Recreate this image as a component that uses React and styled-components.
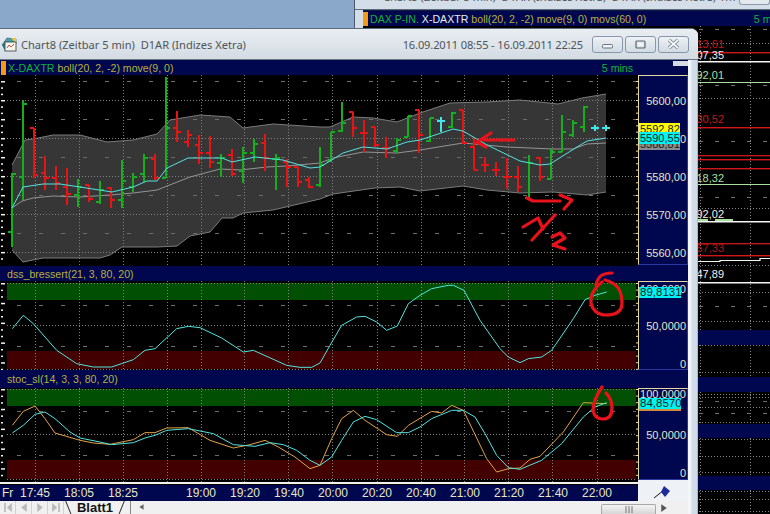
import React from 'react';
import styled, { createGlobalStyle } from 'styled-components';

const navy = '#00074f';
const cream = '#e6e6c4';
const chartFont = '"Liberation Sans", Arial, sans-serif';

const GlobalStyle = createGlobalStyle`
  html, body {
    margin: 0;
    padding: 0;
    background: #8aa9ca;
    overflow: hidden;
  }
`;

// x, high, low, open (left tick), close (right tick), colour
const G = '#16ad1e';
const R = '#e81414';
const C = '#3fe6ea';
const BARS = [
  [12, 173, 247, 232, 174, G], [23, 100, 200, 177, 104, G], [34, 128, 178, 128, 175, R],
  [45, 156, 190, 173, 178, R], [56, 166, 190, 178, 183, R], [67, 168, 205, 187, 194, R],
  [78, 179, 207, 195, 187, G], [89, 185, 202, 185, 199, R], [100, 181, 204, 202, 190, G],
  [111, 187, 208, 188, 200, R], [122, 160, 208, 200, 181, G], [133, 173, 192, 187, 177, G],
  [144, 154, 182, 174, 158, G], [155, 154, 180, 159, 178, R], [166, 77, 178, 178, 128, G],
  [177, 111, 142, 128, 132, R], [188, 130, 147, 142, 135, R], [199, 135, 164, 145, 153, R],
  [210, 136, 168, 153, 162, R], [221, 154, 177, 163, 158, G], [232, 149, 176, 155, 174, R],
  [243, 147, 183, 171, 153, G], [254, 139, 162, 153, 144, G], [265, 134, 171, 143, 158, R],
  [276, 154, 190, 159, 158, G], [287, 159, 187, 162, 167, R], [298, 167, 187, 167, 182, R],
  [309, 177, 188, 180, 187, R], [320, 147, 187, 185, 165, G], [331, 132, 162, 161, 132, G],
  [342, 102, 132, 131, 123, G], [353, 112, 137, 112, 128, R], [364, 120, 152, 133, 133, R],
  [375, 127, 147, 127, 145, R], [386, 137, 158, 148, 148, R], [397, 138, 153, 151, 140, G],
  [408, 116, 137, 137, 116, G], [419, 110, 153, 110, 135, R], [430, 118, 142, 141, 118, G],
  [441, 117, 132, 121, 121, C], [452, 112, 128, 127, 113, G], [463, 110, 144, 110, 143, R],
  [474, 137, 170, 147, 170, R], [485, 157, 172, 165, 165, R], [496, 162, 176, 170, 170, R],
  [507, 158, 189, 177, 177, R], [518, 166, 192, 177, 187, R], [529, 155, 198, 198, 163, G],
  [540, 157, 181, 158, 177, R], [551, 148, 179, 179, 152, G], [562, 115, 152, 152, 132, G],
  [573, 120, 137, 135, 123, G], [584, 106, 132, 127, 107, G], [595, 125, 131, 128, 128, C],
  [606, 125, 131, 128, 128, C],
];

const BAND_TOP = [
  [12, 165], [25, 140], [33, 139], [53, 135], [80, 135], [107, 142], [133, 140], [157, 134],
  [170, 120], [200, 115], [230, 117], [243, 128], [273, 124], [320, 127], [330, 127], [353, 117],
  [373, 118], [397, 122], [420, 113], [450, 103], [487, 102], [520, 100], [558, 104], [582, 98],
  [606, 94],
];
const BAND_BOTTOM = [
  [12, 250], [23, 262], [43, 258], [100, 258], [110, 255], [122, 247], [157, 247], [177, 246],
  [190, 236], [210, 232], [222, 218], [233, 218], [243, 213], [273, 210], [320, 199], [333, 194],
  [375, 188], [400, 187], [420, 191], [463, 186], [487, 190], [520, 193], [553, 192], [587, 195],
  [606, 192],
];
const MOVS = [
  [12, 208], [22, 201], [33, 198], [53, 196], [80, 197], [110, 195], [133, 193], [157, 190],
  [190, 177], [220, 169], [240, 170], [267, 167], [287, 166], [320, 163], [333, 158], [363, 152],
  [397, 153], [420, 150], [463, 143], [507, 147], [553, 149], [573, 149], [587, 144], [606, 143],
];
const MOVE = [
  [12, 208], [23, 187], [43, 184], [60, 184], [80, 187], [112, 192], [133, 187], [147, 181],
  [157, 181], [167, 168], [188, 158], [222, 158], [232, 162], [255, 157], [283, 160], [310, 168],
  [320, 167], [330, 161], [343, 153], [363, 147], [387, 149], [407, 142], [420, 140], [453, 129],
  [463, 131], [487, 145], [520, 161], [540, 165], [550, 164], [577, 147], [587, 141], [606, 138],
];

// the two lower panes were read in 3x crops: left half and right half
const scale = (left, right, top) => [
  ...left.map(([x, y]) => [x / 3, top + y / 3]),
  ...right.map(([x, y]) => [320 + x / 3, top + y / 3]),
];

const DSS = scale(
  [[37, 200], [70, 160], [100, 185], [170, 265], [230, 305], [280, 315], [335, 315], [400, 293],
    [435, 265], [465, 260], [530, 200], [565, 193], [600, 197], [665, 228], [730, 270], [760, 265],
    [860, 310], [900, 316], [935, 316]],
  [[0, 303], [30, 250], [65, 190], [110, 165], [135, 163], [170, 180], [200, 205], [232, 192],
    [265, 125], [300, 100], [335, 80], [385, 70], [400, 70], [432, 85], [480, 175], [540, 260],
    [565, 285], [600, 302], [625, 290], [665, 285], [695, 265], [760, 170], [795, 113], [825, 100],
    [860, 90]],
  262
);
const STOC_CYAN = scale(
  [[37, 183], [70, 160], [105, 127], [135, 120], [165, 140], [210, 180], [240, 198], [300, 210],
    [335, 218], [400, 212], [435, 198], [465, 190], [500, 175], [565, 170], [640, 185], [700, 218],
    [765, 223], [810, 212], [850, 218], [890, 235], [930, 265]],
  [[0, 280], [35, 255], [65, 205], [100, 150], [135, 133], [170, 143], [230, 182], [265, 182],
    [300, 165], [335, 140], [395, 115], [430, 115], [465, 135], [495, 185], [530, 250], [565, 287],
    [600, 292], [665, 265], [725, 215], [790, 135], [825, 105], [860, 92]],
  372
);
const STOC_ORANGE = scale(
  [[37, 160], [70, 118], [105, 102], [135, 140], [165, 183], [240, 205], [280, 213], [330, 217],
    [400, 203], [435, 182], [465, 182], [500, 168], [565, 167], [630, 205], [700, 228], [750, 218],
    [795, 205], [835, 225], [885, 255], [930, 290]],
  [[0, 280], [35, 200], [65, 140], [100, 115], [135, 145], [200, 188], [232, 193], [265, 160],
    [335, 118], [365, 123], [395, 100], [430, 115], [500, 260], [530, 300], [565, 290], [600, 288],
    [630, 262], [660, 253], [730, 180], [790, 92], [860, 95]],
  372
);

const GRID_X = [35, 79, 123, 167, 201, 244, 288, 332, 377, 421, 464, 508, 552, 597];

const pts = (list) => list.map(([x, y]) => `${x},${y}`).join(' ');

const Desktop = styled.div`
  position: relative;
  width: 770px;
  height: 514px;
  overflow: hidden;
  background: #8aa9ca;
  font-family: ${chartFont};
`;

const BackWindow = styled.div`
  position: absolute;
  left: 354px;
  top: 0;
  width: 416px;
  height: 514px;
  display: flex;
  flex-direction: column;
  background: #d4dee8;
  border-left: 1px solid #4d5b6b;
  box-sizing: border-box;
`;

const BackTitle = styled.div`
  height: 10px;
  flex: none;
  overflow: hidden;
  display: flex;
  padding-left: 28px;
  gap: 4px;
  font-size: 11px;
  line-height: 16px;
  color: #555;
  font-family: "Noto Sans", sans-serif;
  white-space: pre;
  border-bottom: 1px solid #5c6b7b;
  box-sizing: border-box;
`;

const BackTitleText = styled.span`
  margin-top: -11px;
  flex: 1;
  min-width: 0;
  overflow: hidden;
`;

const BackButton = styled.span`
  width: 31px;
  height: 5px;
  border: 1px solid #8c9bad;
  border-top: 0;
  border-radius: 0 0 3px 3px;
  background: #e4e9ee;
  box-sizing: border-box;
  flex: none;
`;

const BackBody = styled.div`
  flex: 1;
  margin-left: 8px;
  display: flex;
  flex-direction: column;
  min-height: 0;
  overflow: hidden;
`;

const BackHeader = styled.div`
  height: 16px;
  flex: none;
  background: ${navy};
  display: flex;
  align-items: center;
  font-size: 10.6px;
  white-space: nowrap;
  border-top: 1px solid #101a40;
  box-sizing: border-box;
`;

const Marker = styled.span`
  width: 5px;
  height: 14px;
  background: #f59a12;
  flex: none;
  margin-right: 2px;
`;

const HeadText = styled.span`
  color: ${({ $color }) => $color};
  margin-right: ${({ $gap }) => $gap ?? 3}px;
`;

const PushRight = styled.span`
  margin-left: auto;
  margin-right: ${({ $bleed }) => -($bleed || 0)}px;
  flex: none;
  align-self: stretch;
  display: flex;
  align-items: center;
`;

const BackStrip = styled.div`
  height: ${({ $h }) => $h}px;
  flex: none;
  background: ${navy};
`;

const ChartSvg = styled.svg`
  display: block;
  flex: none;
  background: #000;
  font-family: ${chartFont};
  font-size: 11px;
`;

const FrontWindow = styled.div`
  position: absolute;
  left: 0;
  top: 28px;
  width: 698px;
  height: 486px;
  display: flex;
  flex-direction: column;
  background: #d6e0ea;
  border-top: 1px solid #5d6b7a;
  border-top-right-radius: 7px;
  box-sizing: border-box;
  overflow: hidden;
`;

const TitleBar = styled.div`
  height: 31px;
  flex: none;
  display: flex;
  align-items: center;
  padding: 0 9px 0 1px;
  background: linear-gradient(#e9eef2, #dde4ea 55%, #d3dbe3);
  border-bottom: 1px solid #6b7886;
  box-sizing: border-box;
  font-family: "Noto Sans", sans-serif;
  font-size: 11.1px;
  color: #4f5458;
  white-space: pre;
`;

const TitleText = styled.span`
  margin-left: 4px;
  flex: 1;
`;

const DateText = styled.span`
  margin-right: 9px;
  letter-spacing: -0.14px;
`;

const WinButtons = styled.div`
  display: flex;
  gap: 2px;
`;

const WinButton = styled.div`
  width: 31px;
  height: 17px;
  display: flex;
  align-items: center;
  justify-content: center;
  border: 1px solid #8797a9;
  border-radius: 3px;
  background: linear-gradient(#eef2f5, #dfe5eb 50%, #d3dbe3);
  box-sizing: border-box;
`;

const WindowBody = styled.div`
  flex: 1;
  display: flex;
  min-height: 0;
`;

const Content = styled.div`
  width: 688px;
  flex: none;
  display: flex;
  flex-direction: column;
`;

const SideFrame = styled.div`
  flex: 1;
  background: linear-gradient(90deg, #f4f7fa 0, #f4f7fa 25%, #d3deea 45%, #cfdbe8 100%);
  border-right: 1px solid #a9b8c8;
`;

const PaneHeader = styled.div`
  height: ${({ $h }) => $h}px;
  flex: none;
  display: flex;
  align-items: center;
  background: ${navy};
  font-size: 10.6px;
  white-space: nowrap;
  padding-left: ${({ $pad }) => $pad || 0}px;
`;

const GripTab = styled.span`
  width: 15px;
  height: 5px;
  background: #d5dbe2;
  margin: 1px 0 0 40px;
  align-self: flex-start;
  flex: none;
`;

const PaneBody = styled.div`
  display: flex;
  height: ${({ $h }) => $h}px;
  flex: none;
  background: ${({ $under }) => $under};
`;

const Axis = styled.div`
  position: relative;
  width: 50px;
  height: ${({ $h }) => $h}px;
  background: ${navy};
  border: 1px solid #2a36a0;
  border-top-color: #e6d9a0;
  border-left-color: #e6d9a0;
  box-sizing: border-box;
  overflow: hidden;
  font-size: 11px;
  color: ${cream};
`;

const AxisLabel = styled.span`
  position: absolute;
  right: 1px;
  top: ${({ $y }) => $y - 6}px;
  line-height: 12px;
`;

const PriceTag = styled.span`
  position: absolute;
  left: 0;
  top: ${({ $y }) => $y}px;
  width: ${({ $w }) => $w}px;
  height: ${({ $h }) => $h}px;
  line-height: ${({ $h }) => $h}px;
  padding-left: 1px;
  overflow: hidden;
  color: #122;
  background: ${({ $bg }) => $bg};
  font-size: ${({ $size }) => $size || 11}px;
  box-sizing: border-box;
`;

const BottomRow = styled.div`
  height: 19px;
  flex: none;
  display: flex;
`;

const TimeColumn = styled.div`
  width: 638px;
  flex: none;
  display: flex;
  flex-direction: column;
  background: #000;
`;

const WhiteRule = styled.div`
  height: 2px;
  flex: none;
  background: #f2f2ec;
  margin-bottom: 1px;
`;

const TimeBar = styled.div`
  flex: 1;
  display: flex;
  align-items: center;
  background: ${navy};
  color: ${cream};
  font-size: 12px;
`;

const DayCell = styled.span`
  width: 13px;
  padding-left: 2px;
  box-sizing: border-box;
  flex: none;
`;

const TimeCell = styled.span`
  width: 44px;
  text-align: center;
  flex: none;
`;

const TimeGap = styled.span`
  width: 34px;
  flex: none;
`;

const FlagCell = styled.div`
  flex: 1;
  background: #eef1f5;
  display: flex;
  align-items: center;
  justify-content: center;
`;

const TabBar = styled.div`
  flex: 1;
  display: flex;
  align-items: flex-start;
  background: #f0f0f0;
  overflow: hidden;
`;

const NavArrows = styled.div`
  display: flex;
  width: 65px;
  flex: none;
`;

const NavArrow = styled.span`
  width: 16px;
  height: 13px;
  display: flex;
  align-items: center;
  justify-content: center;
  box-sizing: border-box;
  border-right: ${({ $plain }) => ($plain ? '0' : '1px solid #d2d2d2')};
  flex: none;
`;

const SheetTab = styled.div`
  width: 60px;
  flex: none;
  text-align: center;
  position: relative;
  font-size: 13px;
  font-weight: bold;
  line-height: 14px;
  color: #111;
  &::before,
  &::after {
    content: '';
    position: absolute;
    top: -1px;
    bottom: -1px;
    width: 1px;
    background: #333;
  }
  &::before {
    left: 3px;
    transform: rotate(-22deg);
  }
  &::after {
    right: 3px;
    transform: rotate(22deg);
  }
`;

const TabDivider = styled.span`
  width: 1px;
  height: 13px;
  background: #888;
  margin: 0 6px 0 5px;
  flex: none;
`;

const ScrollThumb = styled.div`
  width: 55px;
  height: 10px;
  margin: 3px 0 0 auto;
  background: linear-gradient(#f4f4f4, #d6d6d6);
  border: 1px solid #a8a8a8;
  border-bottom: 0;
  border-radius: 2px 2px 0 0;
  box-sizing: border-box;
  flex: none;
  display: flex;
  align-items: center;
  justify-content: center;
`;

const Overlay = styled.svg`
  position: absolute;
  left: 0;
  top: 0;
  pointer-events: none;
`;

const range = (from, to, step) => {
  const out = [];
  for (let v = from; v <= to; v += step) out.push(v);
  return out;
};

const Ticks = ({ from, to, step, major }) => (
  <>
    {range(from, to, step).map((y, i) => (
      <React.Fragment key={y}>
        <rect x={1} y={y} width={i % major === 0 ? 4 : 2} height={1.5} fill="#f2f2f2" />
        <rect x={636} y={y} width={2} height={1} fill="#f0e0a0" />
      </React.Fragment>
    ))}
  </>
);

const Grid = ({ top, bottom, dotted, dashed }) => (
  <>
    {GRID_X.map((x) => (
      <line key={x} x1={x + 0.5} x2={x + 0.5} y1={top} y2={bottom} stroke="#808080" strokeDasharray="1 2" />
    ))}
    {dotted.map((y) => (
      <line key={y} x1={7} x2={636} y1={y + 0.5} y2={y + 0.5} stroke="#808080" strokeDasharray="1 2" />
    ))}
    {dashed.map((y) => (
      <line key={y} x1={17} x2={636} y1={y + 0.5} y2={y + 0.5} stroke="#6c6c6c" strokeDasharray="4 18" />
    ))}
  </>
);

const Bar = ({ bar: [x, high, low, open, close, color] }) => (
  <g fill={color}>
    <rect x={x - 1} y={high} width={2} height={low - high} />
    <rect x={x - 4} y={open - 1} width={4} height={2} />
    <rect x={x} y={close - 1} width={4} height={2} />
  </g>
);

const Trace = ({ points, color, width = 1 }) => (
  <polyline points={pts(points)} fill="none" stroke={color} strokeWidth={width} strokeLinejoin="round" />
);

const PriceChart = () => (
  <ChartSvg width={638} height={191} viewBox="0 75 638 191">
    <polygon points={pts([...BAND_TOP, ...[...BAND_BOTTOM].reverse()])} fill="#363636" />
    <Grid
      top={75}
      bottom={266}
      dotted={[100, 138, 176, 214, 252]}
      dashed={[81, 119, 157, 195, 233]}
    />
    <Trace points={BAND_TOP} color="#7c7c7c" />
    <Trace points={BAND_BOTTOM} color="#7c7c7c" />
    <Trace points={MOVS} color="#949494" />
    {BARS.map((bar) => (
      <Bar key={bar[0]} bar={bar} />
    ))}
    <Trace points={MOVE} color="#52e4e0" />
    <Ticks from={81} to={262} step={6.33} major={3} />
  </ChartSvg>
);

const OscillatorChart = ({ top, height, greenY, greenH, redY, redH, dotted, dashed, children }) => (
  <ChartSvg width={638} height={height} viewBox={`0 ${top} 638 ${height}`}>
    <rect x={7} y={greenY} width={629} height={greenH} fill="#004f02" />
    <rect x={7} y={redY} width={629} height={redH} fill="#420000" />
    <Grid top={top} bottom={top + height} dotted={dotted} dashed={dashed} />
    {children}
    <Ticks from={greenY} to={redY + redH} step={6.6} major={3} />
  </ChartSvg>
);

const BackPane = ({ top, height, dotted, dashed, children }) => (
  <ChartSvg width={407} height={height} viewBox={`363 ${top} 407 ${height}`}>
    {[700, 750].map((x) => (
      <line key={x} x1={x + 0.5} x2={x + 0.5} y1={top} y2={top + height} stroke="#8a8a8a" strokeDasharray="1 2" />
    ))}
    {dotted.map((y) => (
      <line key={y} x1={363} x2={770} y1={y + 0.5} y2={y + 0.5} stroke="#858585" strokeDasharray="1 2" />
    ))}
    {dashed.map((y) => (
      <line key={y} x1={363} x2={770} y1={y + 0.5} y2={y + 0.5} stroke="#707070" strokeDasharray="4 12" />
    ))}
    {children}
  </ChartSvg>
);

const BackLevels = () => (
  <>
    {[[52, '#d01818'], [127, '#d01818'], [155, '#c41616'], [159, '#d01818'], [168, '#d01818'], [243, '#c01414'], [255, '#d01818']].map(
      ([y, color]) => (
        <rect key={y} x={698} y={y} width={72} height={1.4} fill={color} />
      )
    )}
    <rect x={698} y={61} width={72} height={1.5} fill="#f4f4f4" />
    <rect x={698} y={82} width={72} height={1} fill="#a8e0a0" />
    <rect x={698} y={184} width={72} height={1} fill="#a8e0a0" />
    <rect x={698} y={221} width={72} height={1.5} fill="#f4f4f4" />
    <rect x={698} y={219} width={10} height={2} fill="#a8e0a0" />
    <rect x={715} y={219} width={18} height={2} fill="#a8e0a0" />
    <polyline points="698,261.5 720,261.5 720,260.5 760,260.5 760,258.5 770,258.5" fill="none" stroke="#f4f4f4" strokeWidth="1.2" />
    <rect x={698} y={282} width={72} height={1.5} fill="#f4f4f4" />
    <text x={724} y={48} textAnchor="end" fill="#c81818">13,61</text>
    <text x={724} y={59} textAnchor="end" fill="#f0f0f0">07,35</text>
    <text x={724} y={79} textAnchor="end" fill="#a8e0a0">92,01</text>
    <text x={724} y={123} textAnchor="end" fill="#c81818">30,52</text>
    <text x={724} y={182} textAnchor="end" fill="#a8e0a0">18,32</text>
    <text x={724} y={218} textAnchor="end" fill="#f0f0f0">92,02</text>
    <text x={724} y={252} textAnchor="end" fill="#b01414">57,33</text>
    <text x={724} y={278} textAnchor="end" fill="#f0f0f0">47,89</text>
  </>
);

const Scribbles = () => (
  <g fill="none" stroke="#e8121a" strokeWidth={3.2} strokeLinecap="round" strokeLinejoin="round">
    <path d="M514 140 L484 140 M491 133 L477 142 L486 147" />
    <path d="M527 198 L533 201 L560 201 M560 195 L572 200 L564 209" />
    <path d="M523 227 L538 218 L543 229" />
    <path d="M555 215 L532 240" />
    <path d="M552 237 L560 233 L565 238 L553 245 L565 249" />
    <path d="M612 273 C604 273 598 275 596 285 M605 280 C616 283 622 289 622 303 C622 312 616 315 606 315 C597 315 592 309 591 303 C590 295 595 287 602 282" />
    <path d="M602 387 C596 396 593 403 593 410 C594 417 598 419 603 419 C609 419 612 415 612 408 C612 402 610 397 606 393" />
  </g>
);

const TitleIcon = () => (
  <svg width="16" height="15" viewBox="0 0 16 15">
    <path d="M1 8 L6 1 L15 2 L15 7 Z" fill="#4aa0a8" stroke="#2f5d62" strokeWidth="0.6" />
    <path d="M10 1 L15 1 L15 6 Z" fill="#e8c93a" />
    <rect x="4" y="5" width="11" height="9" fill="#f6f3ea" stroke="#3a3a3a" strokeWidth="0.8" />
    <path d="M6 11 L8 8 L10 10 L13 7" fill="none" stroke="#c8402a" strokeWidth="0.9" />
    <path d="M1 8 L4 14 L4 6" fill="#2a6f78" />
  </svg>
);

const MinIcon = () => (
  <svg width="13" height="9" viewBox="0 0 13 9">
    <rect x="1.5" y="4.5" width="10" height="3.5" rx="1" fill="#f2f4f6" stroke="#66727f" />
  </svg>
);

const MaxIcon = () => (
  <svg width="12" height="9" viewBox="0 0 12 9">
    <rect x="1" y="1" width="9" height="7" rx="1" fill="none" stroke="#5a6673" strokeWidth="1.2" />
    <rect x="3" y="3" width="5" height="3" fill="#f2f4f6" />
  </svg>
);

const CloseIcon = () => (
  <svg width="13" height="10" viewBox="0 0 13 10">
    <path d="M2 1 L11 9 M11 1 L2 9" stroke="#6f7b88" strokeWidth="3.4" />
    <path d="M2 1 L11 9 M11 1 L2 9" stroke="#f6f8fa" strokeWidth="1.8" />
  </svg>
);

const Flag = () => (
  <svg width="24" height="16" viewBox="0 0 24 16">
    <path d="M3 14 L13 6" stroke="#111" strokeWidth="1" />
    <path d="M13 2 L19 7 L14 13 L10 8 Z" fill="#1a2c9c" />
  </svg>
);

const Arrow = ({ d, fill = '#b9b9b9' }) => (
  <svg width="10" height="11" viewBox="0 0 9 10">
    <path d={d} fill={fill} />
  </svg>
);

const App = () => (
  <Desktop>
    <GlobalStyle />
    <BackWindow>
      <BackTitle>
        <BackTitleText>Chart5 (Zeitbar 5 min)  D1AR (Indizes Xetra)  D1AR (Indizes Xetra) 1m</BackTitleText>
        <BackButton />
      </BackTitle>
      <BackBody>
        <BackHeader>
          <Marker />
          <HeadText $color="#12b43a">DAX P-IN.</HeadText>
          <HeadText $color="#e8f0f0">X-DAXTR</HeadText>
          <HeadText $color="#b8b040">boll(20, 2, -2) move(9, 0) movs(60, 0)</HeadText>
          <PushRight $bleed={15}>
            <HeadText $color="#12b43a" $gap={0}>5 mins</HeadText>
          </PushRight>
        </BackHeader>
        <BackPane top={26} height={304} dotted={[43, 98, 155, 208, 265, 292, 321]} dashed={[29, 85, 141, 197, 306]}>
          <BackLevels />
        </BackPane>
        <BackStrip $h={15} />
        <BackPane top={345} height={32} dotted={[345, 372]} dashed={[]} />
        <BackStrip $h={15} />
        <BackPane top={392} height={32} dotted={[394, 397, 407, 422]} dashed={[401, 413]} />
        <BackStrip $h={14} />
        <BackPane top={438} height={38} dotted={[439, 456, 472]} dashed={[]} />
        <BackStrip $h={14} />
        <BackPane top={490} height={24} dotted={[491, 499, 511]} dashed={[]} />
      </BackBody>
    </BackWindow>

    <FrontWindow>
      <TitleBar>
        <TitleIcon />
        <TitleText>Chart8 (Zeitbar 5 min)  D1AR (Indizes Xetra)</TitleText>
        <DateText>16.09.2011 08:55 - 16.09.2011 22:25</DateText>
        <WinButtons>
          <WinButton><MinIcon /></WinButton>
          <WinButton><MaxIcon /></WinButton>
          <WinButton><CloseIcon /></WinButton>
        </WinButtons>
      </TitleBar>
      <WindowBody>
        <Content>
          <PaneHeader $h={15} $pad={1}>
            <Marker />
            <HeadText $color="#12b43a">X-DAXTR</HeadText>
            <HeadText $color="#b8b040">boll(20, 2, -2) move(9, 0)</HeadText>
            <PushRight>
              <HeadText $color="#12b43a" $gap={0}>5 mins</HeadText>
              <GripTab />
            </PushRight>
          </PaneHeader>
          <PaneBody $h={191} $under={navy}>
            <PriceChart />
            <Axis $h={190}>
              <AxisLabel $y={25}>5600,00</AxisLabel>
              <AxisLabel $y={63}>5590,00</AxisLabel>
              <AxisLabel $y={101}>5580,00</AxisLabel>
              <AxisLabel $y={139}>5570,00</AxisLabel>
              <AxisLabel $y={177}>5560,00</AxisLabel>
              <PriceTag $y={62} $w={41} $h={12} $bg="#8b8b8b">5588,81</PriceTag>
              <PriceTag $y={47} $w={41} $h={12} $bg="#ffff00">5592,82</PriceTag>
              <PriceTag $y={56} $w={41} $h={12} $bg="#00f2f2">5590,55</PriceTag>
            </Axis>
          </PaneBody>

          <PaneHeader $h={15} $pad={7}>
            <HeadText $color="#b8b040">dss_bressert(21, 3, 80, 20)</HeadText>
          </PaneHeader>
          <PaneBody $h={89} $under={navy}>
            <OscillatorChart
              top={281}
              height={89}
              greenY={283}
              greenH={17}
              redY={351}
              redH={18}
              dotted={[283, 325, 369]}
              dashed={[305, 346]}
            >
              <Trace points={DSS} color="#52e4e0" />
            </OscillatorChart>
            <Axis $h={89}>
              <AxisLabel $y={7}>100,0000</AxisLabel>
              <AxisLabel $y={44}>50,0000</AxisLabel>
              <AxisLabel $y={82}>0</AxisLabel>
              <PriceTag $y={5} $w={42} $h={11} $bg="#00f2f2" $size={11.5}>89,8131</PriceTag>
            </Axis>
          </PaneBody>

          <PaneHeader $h={18} $pad={7}>
            <HeadText $color="#b8b040">stoc_sl(14, 3, 3, 80, 20)</HeadText>
          </PaneHeader>
          <PaneBody $h={94} $under="#eef1f5">
            <OscillatorChart
              top={388}
              height={94}
              greenY={389}
              greenH={17}
              redY={460}
              redH={19}
              dotted={[389, 434, 479]}
              dashed={[411, 455]}
            >
              <Trace points={STOC_ORANGE} color="#e2a344" />
              <Trace points={STOC_CYAN} color="#52e4e0" />
            </OscillatorChart>
            <Axis $h={92}>
              <AxisLabel $y={5}>100,0000</AxisLabel>
              <AxisLabel $y={46}>50,0000</AxisLabel>
              <AxisLabel $y={84}>0</AxisLabel>
              <PriceTag $y={11} $w={42} $h={11} $bg="#d08a40" />
              <PriceTag $y={9} $w={42} $h={11} $bg="#00f2f2" $size={11.5}>84,8570</PriceTag>
            </Axis>
          </PaneBody>

          <BottomRow>
            <TimeColumn>
              <WhiteRule />
              <TimeBar>
                <DayCell>Fr</DayCell>
                <TimeCell>17:45</TimeCell>
                <TimeCell>18:05</TimeCell>
                <TimeCell>18:25</TimeCell>
                <TimeGap />
                <TimeCell>19:00</TimeCell>
                <TimeCell>19:20</TimeCell>
                <TimeCell>19:40</TimeCell>
                <TimeCell>20:00</TimeCell>
                <TimeCell>20:20</TimeCell>
                <TimeCell>20:40</TimeCell>
                <TimeCell>21:00</TimeCell>
                <TimeCell>21:20</TimeCell>
                <TimeCell>21:40</TimeCell>
                <TimeCell>22:00</TimeCell>
              </TimeBar>
            </TimeColumn>
            <FlagCell>
              <Flag />
            </FlagCell>
          </BottomRow>

          <TabBar>
            <NavArrows>
              <NavArrow><Arrow d="M1 1 H2.5 V9 H1 Z M8 1 V9 L3.5 5 Z" /></NavArrow>
              <NavArrow><Arrow d="M7 1 V9 L2 5 Z" /></NavArrow>
              <NavArrow><Arrow d="M2 1 V9 L7 5 Z" /></NavArrow>
              <NavArrow><Arrow d="M1 1 V9 L5.5 5 Z M6.5 1 H8 V9 H6.5 Z" /></NavArrow>
            </NavArrows>
            <SheetTab>Blatt1</SheetTab>
            <TabDivider />
            <Arrow d="M6 3 V8 L2 5.5 Z" fill="#666" />
            <ScrollThumb>
              <svg width="8" height="7" viewBox="0 0 8 7">
                <path d="M1 0 V7 M4 0 V7 M7 0 V7" stroke="#777" />
              </svg>
            </ScrollThumb>
            <NavArrow $plain><Arrow d="M2 2 V9 L7 5.5 Z" fill="#555" /></NavArrow>
            <NavArrow $plain />
          </TabBar>
        </Content>
        <SideFrame />
      </WindowBody>
      <Overlay width={698} height={486} viewBox="0 29 698 486">
        <Scribbles />
      </Overlay>
    </FrontWindow>
  </Desktop>
);

export default App;
